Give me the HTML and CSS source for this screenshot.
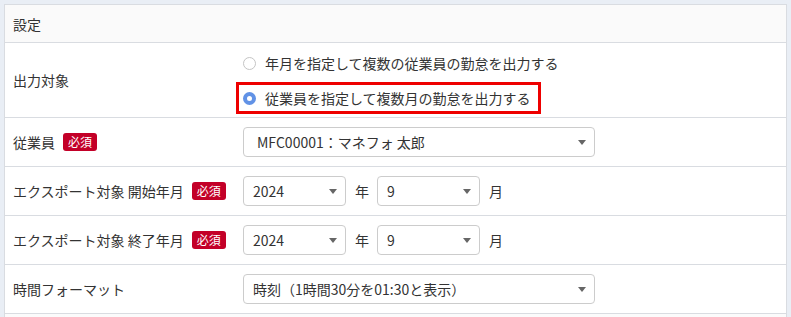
FILE: index.html
```html
<!DOCTYPE html>
<html lang="ja">
<head>
    <meta charset="UTF-8">
    <meta name="viewport" content="width=device-width, initial-scale=1.0">
    <title>勤怠エクスポート</title>
    <link rel="stylesheet" href="styles.css">
</head>
<body>
    <div class="panel">
        <div class="panel-head">設定</div>

        <div class="row">
            <div class="label">出力対象</div>
            <div class="value radios">
                <div class="radio">
                    <span class="dot"></span>
                    <span>年月を指定して複数の従業員の勤怠を出力する</span>
                </div>
                <div class="radio checked highlight">
                    <span class="dot"></span>
                    <span>従業員を指定して複数月の勤怠を出力する</span>
                </div>
            </div>
        </div>

        <div class="row">
            <div class="label">従業員 <span class="req">必須</span></div>
            <div class="value">
                <div class="select wide employee">
                    <span>MFC00001：マネフォ 太郎</span>
                    <svg class="arrow" width="8" height="5" viewBox="0 0 8 5"><path d="M0 0H8L4 5Z" fill="#666"/></svg>
                </div>
            </div>
        </div>

        <div class="row">
            <div class="label">エクスポート対象 開始年月 <span class="req">必須</span></div>
            <div class="value">
                <div class="select short">
                    <span>2024</span>
                    <svg class="arrow" width="8" height="5" viewBox="0 0 8 5"><path d="M0 0H8L4 5Z" fill="#666"/></svg>
                </div>
                <span class="unit">年</span>
                <div class="select short">
                    <span>9</span>
                    <svg class="arrow" width="8" height="5" viewBox="0 0 8 5"><path d="M0 0H8L4 5Z" fill="#666"/></svg>
                </div>
                <span class="unit">月</span>
            </div>
        </div>

        <div class="row">
            <div class="label">エクスポート対象 終了年月 <span class="req">必須</span></div>
            <div class="value">
                <div class="select short">
                    <span>2024</span>
                    <svg class="arrow" width="8" height="5" viewBox="0 0 8 5"><path d="M0 0H8L4 5Z" fill="#666"/></svg>
                </div>
                <span class="unit">年</span>
                <div class="select short">
                    <span>9</span>
                    <svg class="arrow" width="8" height="5" viewBox="0 0 8 5"><path d="M0 0H8L4 5Z" fill="#666"/></svg>
                </div>
                <span class="unit">月</span>
            </div>
        </div>

        <div class="row">
            <div class="label">時間フォーマット</div>
            <div class="value">
                <div class="select wide">
                    <span>時刻（1時間30分を01:30と表示）</span>
                    <svg class="arrow" width="8" height="5" viewBox="0 0 8 5"><path d="M0 0H8L4 5Z" fill="#666"/></svg>
                </div>
            </div>
        </div>

        <div class="row more"></div>
    </div>
</body>
</html>
```

FILE: styles.css
```css
body {
    margin: 0;
    background-color: #e9eef5;
    font-family: "Noto Sans CJK JP", "Noto Sans", sans-serif;
    font-size: 14px;
    color: #333;
}

.panel {
    margin: 4px 4px 0 4px;
    background-color: #fff;
    border-top: 1px solid #d9dce1;
    border-left: 1px solid #d9dce1;
    border-right: 1px solid #d9dce1;
}

.panel-head {
    height: 37px;
    padding-left: 8px;
    display: flex;
    align-items: center;
    background-color: #fafafa;
    border-bottom: 1px solid #d9dce1;
}

.row {
    display: grid;
    grid-template-columns: 238px 1fr;
    padding: 9px 0;
    border-bottom: 1px solid #d9dce1;
}

.row.more {
    height: 0;
    background-color: #fbfbfb;
}

.label {
    padding-left: 8px;
    display: flex;
    align-items: center;
}

.value {
    display: flex;
    align-items: center;
}

.radios {
    flex-direction: column;
    align-items: flex-start;
    margin: -1px 0 -6px 0;
}

.radio {
    height: 24px;
    display: flex;
    align-items: center;
    gap: 9px;
}

.radio .dot {
    flex: none;
    display: block;
    box-sizing: border-box;
    width: 13px;
    height: 13px;
    border: 1px solid #c4c4c4;
    border-radius: 50%;
    background-color: #fff;
}

.radio.checked .dot {
    border: 4px solid #6192e6;
}

.highlight {
    margin-top: 7px;
    margin-left: -7px;
    height: 26px;
    padding: 0 7px 0 4px;
    border: 3px solid #ee0000;
}

.req {
    margin-left: 8px;
    padding: 0 5px;
    height: 18px;
    line-height: 18px;
    font-size: 12px;
    color: #fff;
    background-color: #c30028;
    border-radius: 3px;
}

.select {
    height: 28px;
    display: flex;
    align-items: center;
    padding: 0 8px 0 9px;
    border: 1px solid #ccc;
    border-radius: 4px;
    background-color: #fff;
}

.select .arrow {
    margin-left: auto;
}

.select.wide {
    width: 333px;
}

.select.employee {
    padding-left: 13px;
    width: 329px;
}

.select.short {
    width: 84px;
}

.unit {
    padding: 0 8px 0 9px;
}
```
